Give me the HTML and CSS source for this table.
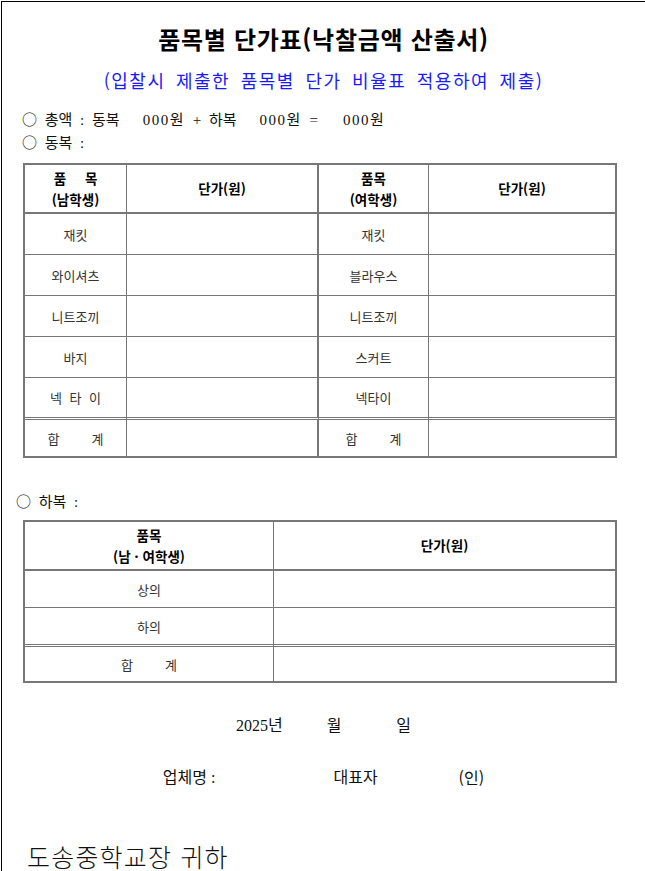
FILE: index.html
```html
<!DOCTYPE html>
<html lang="ko">
<head>
<meta charset="utf-8">
<title>품목별 단가표</title>
<link rel="stylesheet" href="styles.css">
</head>
<body>
<div class="page">
  <h1 class="title">품목별 단가표(낙찰금액 산출서)</h1>
  <p class="subtitle">(입찰시 제출한 품목별 단가 비율표 적용하여 제출)</p>
  <p class="line first"><span class="mark">○</span> 총액 : 동복<span class="gap"></span><span class="amt">000원</span> + 하복<span class="gap"></span><span class="amt">000원</span> =<span class="gap wide"></span><span class="amt">000원</span></p>
  <p class="line"><span class="mark">○</span> 동복 :</p>

  <div class="grid summer">
    <div class="cell head">품&nbsp;&nbsp;&nbsp;&nbsp;&nbsp;목<br>(남학생)</div>
    <div class="cell head mid">단가(원)</div>
    <div class="cell head">품목<br>(여학생)</div>
    <div class="cell head last">단가(원)</div>

    <div class="cell">재킷</div><div class="cell mid"></div><div class="cell">재킷</div><div class="cell last"></div>
    <div class="cell">와이셔츠</div><div class="cell mid"></div><div class="cell">블라우스</div><div class="cell last"></div>
    <div class="cell">니트조끼</div><div class="cell mid"></div><div class="cell">니트조끼</div><div class="cell last"></div>
    <div class="cell">바지</div><div class="cell mid"></div><div class="cell">스커트</div><div class="cell last"></div>
    <div class="cell nob spaced">넥 타 이</div><div class="cell mid nob"></div><div class="cell nob">넥타이</div><div class="cell last nob"></div>

    <div class="cell sum">합<span class="sumgap"></span>계</div><div class="cell mid sum"></div><div class="cell sum">합<span class="sumgap"></span>계</div><div class="cell last sum"></div>
  </div>

  <p class="line winter"><span class="mark">○</span> 하복 :</p>

  <div class="grid summer2">
    <div class="cell head">품목<br>(남 · 여학생)</div>
    <div class="cell head last">단가(원)</div>
    <div class="cell">상의</div><div class="cell last"></div>
    <div class="cell nob">하의</div><div class="cell last nob"></div>
    <div class="cell sum">합<span class="sumgap"></span>계</div><div class="cell last sum"></div>
  </div>

  <p class="footline date"><span>2025년</span><span class="month">월</span><span class="day">일</span></p>
  <p class="footline company"><span>업체명 :</span><span class="rep">대표자</span><span class="seal">(인)</span></p>

  <p class="addressee">도송중학교장 귀하</p>
</div>
</body>
</html>
```

FILE: styles.css
```css
* {
  box-sizing: border-box;
  margin: 0;
  padding: 0;
}

body {
  margin: 0;
  background: #fff;
  font-family: "Noto Sans CJK KR", "Noto Sans", sans-serif;
  color: #000;
}

.page {
  margin: 1px 0 0 1px;
  border-top: 1px solid #000;
  border-left: 1px solid #000;
  min-height: 870px;
}

.title {
  font-size: 24px;
  font-weight: 700;
  line-height: 30px;
  text-align: center;
  margin-top: 22px;
  letter-spacing: 0.7px;
}

.subtitle {
  font-size: 18px;
  font-weight: 400;
  color: #1a1aff;
  line-height: 24px;
  text-align: center;
  margin-top: 14px;
  letter-spacing: 1.5px;
  word-spacing: 4px;
}

.line {
  font-family: "Liberation Serif", "Noto Sans CJK KR", serif;
  font-size: 15px;
  line-height: 23px;
  margin-left: 20px;
  height: 23px;
  color: #111;
  word-spacing: 4px;
}

.mark {
  font-family: "Noto Sans CJK KR", sans-serif;
  font-size: 15px;
}

.amt {
  letter-spacing: 1.5px;
}

.line.first {
  margin-top: 15px;
}

.gap {
  display: inline-block;
  width: 23px;
}

.gap.wide {
  width: 25px;
}

.line.winter {
  margin-top: 31px;
  margin-left: 14px;
}

.grid {
  display: grid;
  border: 2px solid #777;
  margin-left: 21px;
  width: 594px;
}

.summer {
  margin-top: 10px;
  grid-template-columns: 102px 192px 110px 186px;
  grid-template-rows: 49px 41px 41px 41px 41px 39px 39px;
}

.summer2 {
  margin-top: 8px;
  grid-template-columns: 249px 341px;
  grid-template-rows: 49px 37px 36px 37px;
}

.cell {
  display: flex;
  align-items: center;
  justify-content: center;
  text-align: center;
  border-right: 1px solid #777;
  border-bottom: 1px solid #777;
  font-size: 13px;
  line-height: 21px;
  color: #333;
}

.cell.head {
  font-size: 13.5px;
  font-weight: 700;
  color: #000;
  border-bottom-width: 2px;
}

.cell.spaced {
  word-spacing: 4px;
}

.cell.mid {
  border-right-width: 2px;
}

.cell.last {
  border-right: none;
}

.cell.nob {
  border-bottom: none;
}

.cell.sum {
  border-top: 3px double #777;
  border-bottom: none;
}

.sumgap {
  display: inline-block;
  width: 32px;
}

.footline {
  display: flex;
  justify-content: center;
  font-family: "Liberation Serif", "Noto Sans CJK KR", serif;
  font-size: 16px;
  line-height: 23px;
  color: #111;
}

.footline.date {
  margin-top: 31px;
}

.month {
  margin-left: 44px;
}

.day {
  margin-left: 55px;
}

.footline.company {
  margin-top: 29px;
}

.rep {
  margin-left: 118px;
}

.seal {
  margin-left: 81px;
  font-family: "Noto Sans CJK KR", sans-serif;
}

.addressee {
  margin-top: 53px;
  margin-left: 25px;
  font-size: 25px;
  font-weight: 300;
  line-height: 28px;
  letter-spacing: 1.2px;
  color: #111;
}
```
